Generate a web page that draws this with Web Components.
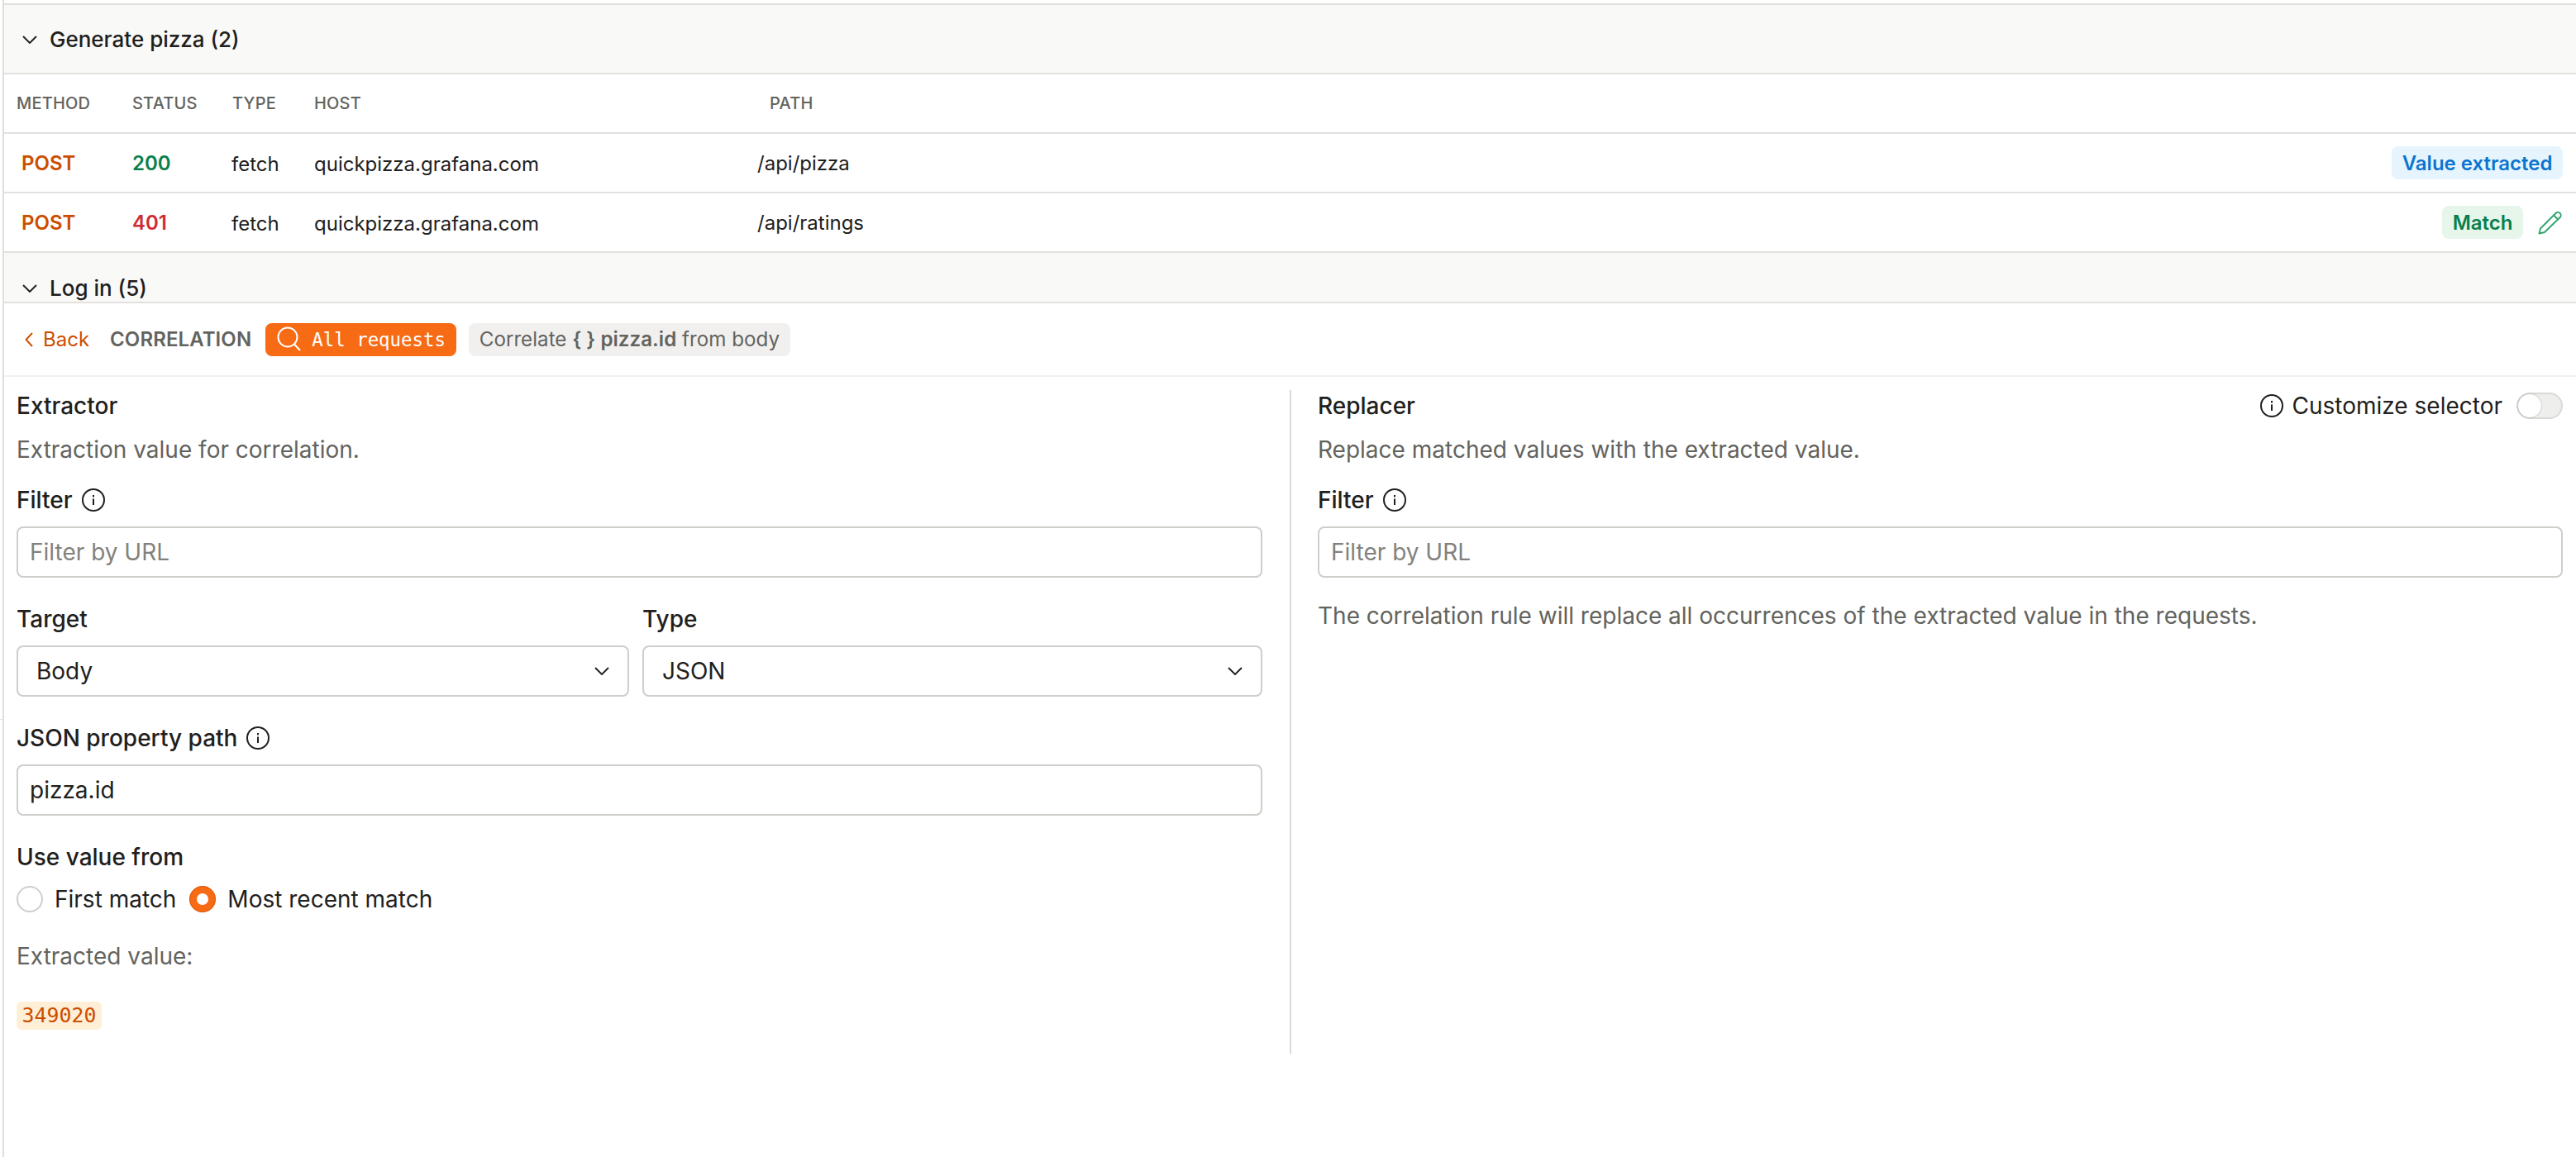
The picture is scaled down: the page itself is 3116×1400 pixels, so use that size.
<!DOCTYPE html>
<html><head><meta charset="utf-8">
<style>
html,body{margin:0;padding:0;background:#fff;}
body{font-family:Inter,"Liberation Sans",sans-serif;color:#21201c;height:1400px;overflow:hidden;}
</style></head><body>
<ks-app>
  <ks-group label="Generate pizza (2)" top></ks-group>
  <ks-row head>
    <span>METHOD</span><span>STATUS</span><span>TYPE</span><span>HOST</span><span>PATH</span>
  </ks-row>
  <ks-row>
    <b style="color:#cc4e00">POST</b><b style="color:#0b7f4b">200</b><span class="low">fetch</span><span class="low">quickpizza.grafana.com</span><span>/api/pizza</span>
    <ks-badge tone="blue" slot="end">Value extracted</ks-badge>
  </ks-row>
  <ks-row>
    <b style="color:#cc4e00">POST</b><b style="color:#ce2c31">401</b><span class="low">fetch</span><span class="low">quickpizza.grafana.com</span><span>/api/ratings</span>
    <ks-badge tone="green" slot="end">Match</ks-badge>
    <ks-pencil slot="end"></ks-pencil>
  </ks-row>
  <ks-group label="Log in (5)" cut></ks-group>
  <ks-toolbar></ks-toolbar>
  <ks-panels>
    <ks-panel slot="left" heading="Extractor" desc="Extraction value for correlation.">
      <ks-label info>Filter</ks-label>
      <ks-input placeholder="Filter by URL"></ks-input>
      <ks-pair>
        <div slot="a"><ks-label pair>Target</ks-label><ks-select value="Body"></ks-select></div>
        <div slot="b"><ks-label pair>Type</ks-label><ks-select value="JSON"></ks-select></div>
      </ks-pair>
      <ks-label info spaced>JSON property path</ks-label>
      <ks-input value="pizza.id"></ks-input>
      <ks-label spaced>Use value from</ks-label>
      <ks-radios></ks-radios>
      <ks-extracted value="349020"></ks-extracted>
    </ks-panel>
    <ks-panel slot="right" heading="Replacer" desc="Replace matched values with the extracted value." customize>
      <ks-label info>Filter</ks-label>
      <ks-input placeholder="Filter by URL"></ks-input>
      <ks-note>The correlation rule will replace all occurrences of the extracted value in the requests.</ks-note>
    </ks-panel>
  </ks-panels>
</ks-app>
<script>
const INFO=`<svg width="28" height="28" viewBox="0 0 28 28" fill="none" style="display:block;flex:none"><circle cx="14" cy="14" r="13" stroke="#21201c" stroke-width="2"/><rect x="13" y="12.5" width="2" height="7.5" fill="#21201c"/><rect x="13" y="8" width="2" height="2.4" fill="#21201c"/></svg>`;
const CHEV=`<svg width="18" height="10" viewBox="0 0 18 10" fill="none" style="display:block;flex:none"><path d="M1 1l8 8 8-8" stroke="#21201c" stroke-width="1.9"/></svg>`;
function def(name,render){customElements.define(name,class extends HTMLElement{connectedCallback(){if(this.shadowRoot)return;this.attachShadow({mode:'open'}).innerHTML=render(this);}});}
def('ks-app',()=>`<style>:host{display:block;margin-left:3px;padding-top:4px;height:1396px;border-left:2px solid #e0dfdc;position:relative}
.tick{position:absolute;left:-5px;top:870px;width:3px;height:1px;background:#e4e3e0}</style><div class="tick"></div><slot></slot>`);
def('ks-group',h=>{const cut=h.hasAttribute('cut');return `<style>:host{display:block;overflow:hidden;background:#f9f9f8;border-bottom:2px solid #e2e1de;height:${cut?59:82}px;${h.hasAttribute('top')?'border-top:2px solid #e2e1de;':''}}
.r{height:${cut?86:84}px;display:flex;align-items:center;gap:15px;padding-left:22px;font-size:26px;font-weight:500;line-height:40px}</style>
<div class="r">${CHEV}<span>${h.getAttribute('label')}</span></div>`});
def('ks-row',h=>{const head=h.hasAttribute('head');return `<style>:host{display:block;border-bottom:2px solid #e2e1de;height:70px;box-sizing:content-box}
.g{height:70px;display:grid;align-items:center;
 ${head?'padding-left:15px;grid-template-columns:140px 121px 99px 551px 1fr;font-size:20px;font-weight:500;color:#63635e;letter-spacing:.2px':'padding-left:21px;padding-right:16px;grid-template-columns:134px 120px 100px 536px 1fr auto;font-size:24px;color:#21201c'}}
.end{display:flex;align-items:center;gap:18px}
::slotted(b){font-weight:600}
::slotted(.low){padding-top:3px}</style>
<div class="g"><slot></slot>${head?'':'<div class="end"><slot name="end"></slot></div>'}</div>`});
def('ks-badge',h=>{const t=h.getAttribute('tone')==='blue';return `<style>:host{display:inline-flex;align-items:center;height:40px;padding:0 12.5px;border-radius:8px;font-size:24px;font-weight:600;background:${t?'#e6f4fe':'#e6f6eb'};color:${t?'#0d74ce':'#0b7f4b'}}</style><slot></slot>`});
def('ks-pencil',()=>`<style>:host{display:block;width:30px;height:30px}</style><svg width="30" height="30" viewBox="0 0 30 30" fill="none" style="display:block"><path d="M1.5 28.5l1.5-6L21.5 4a3.6 3.6 0 0 1 5.2 5L8 27z" stroke="#30a46c" stroke-width="1.9" stroke-linejoin="round"/><path d="M19 6.500l5.200 5" stroke="#30a46c" stroke-width="1.900"/></svg>`);
def('ks-toolbar',()=>`<style>:host{display:flex;align-items:center;height:87px;border-bottom:2px solid #f0f0ee;padding-left:25px;font-size:24px}
.back{display:flex;align-items:center;gap:12px;color:#cc4e00;margin-right:25px}
.t{font-weight:600;color:#63635e;margin-right:17px;letter-spacing:.1px}
.btn{display:flex;align-items:center;height:40px;width:231px;box-sizing:border-box;padding-left:14px;gap:12px;background:#f76b15;color:#fff;border-radius:8px;font:22.4px "DejaVu Sans Mono",monospace;margin-right:15px}
.chip{display:flex;align-items:center;height:40px;box-sizing:border-box;padding:0 12.5px;background:#f1f0ef;color:#63635e;border-radius:8px;font-size:24.2px}
.chip b{font-weight:600;white-space:pre}</style>
<div class="back"><svg width="10" height="18" viewBox="0 0 10 18" fill="none"><path d="M9 1L1.500 9 9 17" stroke="#cc4e00" stroke-width="1.900"/></svg><span>Back</span></div>
<span class="t">CORRELATION</span>
<div class="btn"><svg width="30" height="32" viewBox="0 0 30 32" fill="none"><circle cx="13" cy="13" r="11.500" stroke="#fff" stroke-width="2"/><path d="M21 21.500l7 7.500" stroke="#fff" stroke-width="2"/></svg><span>All requests</span></div>
<div class="chip"><span>Correlate&nbsp;</span><b>{ } pizza.id</b><span>&nbsp;from body</span></div>`);
def('ks-panels',()=>`<style>:host{display:block;padding:16px 16px 0 15px}
.d{width:2px;height:803px;background:#dad9d6;margin-left:33px}
.g{display:grid;grid-template-columns:1507px 35px 32px 1fr;width:100%}</style>
<div class="g"><slot name="left"></slot><div class="d"></div><div></div><slot name="right"></slot></div>`);
def('ks-panel',h=>`<style>:host{display:flex;flex-direction:column;min-width:0}
.head{display:flex;justify-content:space-between;align-items:center;height:37px;font-size:28px;font-weight:500}
.desc{height:38px;line-height:38px;margin-top:16px;margin-bottom:25px;font-size:28px;color:#63635e}
.cust{display:flex;align-items:center;font-weight:400;color:#21201c}
.cust span{margin:0 17px 0 11px}
.tg{width:56px;height:32px;box-sizing:border-box;border:2px solid #dad9d6;border-radius:16px;background:#eeeeec;position:relative}
.tg:after{content:"";position:absolute;left:0;top:0;width:28px;height:28px;border-radius:50%;background:#fff;box-shadow:0 0 2px rgba(0,0,0,.35)}</style>
<div class="head"><span>${h.getAttribute('heading')}</span>${h.hasAttribute('customize')?`<div class="cust">${INFO}<span>Customize selector</span><div class="tg"></div></div>`:''}</div>
<div class="desc">${h.getAttribute('desc')}</div><slot></slot>`);
def('ks-label',h=>`<style>:host{display:flex;align-items:center;gap:11px;height:34px;font-size:28px;font-weight:500;margin-top:${h.hasAttribute('spaced')?33:0}px;margin-bottom:15px}</style><slot></slot>${h.hasAttribute('info')?INFO:''}`);
def('ks-input',h=>{const v=h.getAttribute('value');return `<style>:host{display:flex;align-items:center;height:62px;box-sizing:border-box;border:2px solid #cfceca;border-radius:8px;padding-left:14px;font-size:28px;color:${v?'#21201c':'#82827c'}}</style><span>${v||h.getAttribute('placeholder')}</span>`});
def('ks-pair',()=>`<style>:host{display:grid;grid-template-columns:741px 1fr;column-gap:16px;margin-top:33px}</style><slot name="a"></slot><slot name="b"></slot>`);
def('ks-select',h=>`<style>:host{display:flex;align-items:center;justify-content:space-between;height:62px;box-sizing:border-box;border:2px solid #cfceca;border-radius:8px;padding:0 22px;font-size:28px}</style><span>${h.getAttribute('value')}</span>${CHEV}`);
def('ks-radios',()=>`<style>:host{display:flex;align-items:center;height:32px;margin-top:3px;font-size:28px;gap:0}
i{display:block;width:32px;height:32px;box-sizing:border-box;border-radius:50%;flex:none}
.off{border:2px solid #cfceca}
.on{background:#fff;border:9.5px solid #f76b15;outline:1px solid #dc5a0c;outline-offset:-1px}
span{margin-left:14px;margin-right:16px}</style>
<i class="off"></i><span>First match</span><i class="on"></i><span>Most recent match</span>`);
def('ks-extracted',h=>`<style>:host{display:block}
.l{height:38px;line-height:38px;margin-top:34px;font-size:28px;color:#63635e}
code{display:inline-block;margin-top:36px;height:34px;padding:0 6.5px;border-radius:6px;background:#ffefd6;color:#cc4e00;font:24.9px/34px "DejaVu Sans Mono",monospace}</style>
<div class="l">Extracted value:</div><code>${h.getAttribute('value')}</code>`);
def('ks-note',()=>`<style>:host{display:block;height:38px;line-height:38px;margin-top:27px;font-size:28px;color:#63635e}</style><slot></slot>`);
</script>
</body></html>
